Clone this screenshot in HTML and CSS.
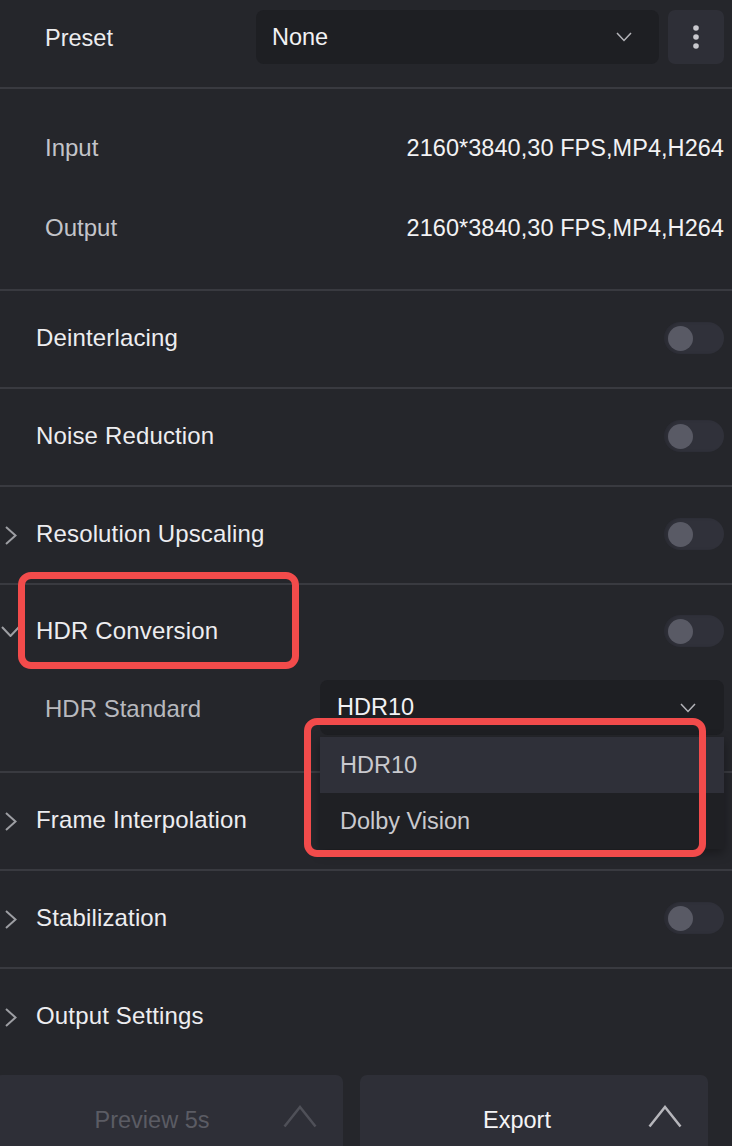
FILE: index.html
```html
<!DOCTYPE html>
<html>
<head>
<meta charset="utf-8">
<link rel="stylesheet" href="styles.css">
</head>
<body>
<div class="panel">
  <div class="preset-row">
    <span class="preset-label">Preset</span>
    <div class="select preset-select">
      <span>None</span>
      <svg class="caret" width="16" height="10" viewBox="0 0 16 10"><polyline points="1,1 8,8.5 15,1"/></svg>
    </div>
    <div class="more-btn">
      <svg width="8" height="26" viewBox="0 0 8 26"><circle cx="4" cy="4" r="2.8"/><circle cx="4" cy="13" r="2.8"/><circle cx="4" cy="22" r="2.8"/></svg>
    </div>
  </div>
  <div class="divider"></div>

  <div class="io">
    <div class="io-row"><span class="io-label">Input</span><span class="io-value">2160*3840,30 FPS,MP4,H264</span></div>
    <div class="io-row"><span class="io-label">Output</span><span class="io-value">2160*3840,30 FPS,MP4,H264</span></div>
  </div>
  <div class="divider"></div>

  <div class="row">
    <span class="chev"></span>
    <span class="row-label">Deinterlacing</span>
    <span class="toggle"><span class="knob"></span></span>
  </div>
  <div class="divider"></div>

  <div class="row">
    <span class="chev"></span>
    <span class="row-label">Noise Reduction</span>
    <span class="toggle"><span class="knob"></span></span>
  </div>
  <div class="divider"></div>

  <div class="row">
    <span class="chev"><svg class="chev-right" width="12" height="19" viewBox="0 0 12 19"><polyline points="1,1 10.5,9.5 1,18"/></svg></span>
    <span class="row-label">Resolution Upscaling</span>
    <span class="toggle"><span class="knob"></span></span>
  </div>
  <div class="divider"></div>

  <div class="hdr-section">
    <div class="row hdr-head">
      <span class="chev"><svg class="chev-down" width="19" height="11" viewBox="0 0 19 11"><polyline points="1,1 9.5,10 18,1"/></svg></span>
      <span class="row-label">HDR Conversion</span>
      <span class="toggle"><span class="knob"></span></span>
    </div>
    <div class="sub-row">
      <span class="sub-label">HDR Standard</span>
      <div class="select-wrap">
        <div class="select hdr-select">
          <span>HDR10</span>
          <svg class="caret" width="16" height="10" viewBox="0 0 16 10"><polyline points="1,1 8,8.5 15,1"/></svg>
        </div>
        <div class="menu">
          <div class="menu-item active">HDR10</div>
          <div class="menu-item">Dolby Vision</div>
        </div>
      </div>
    </div>
  </div>
  <div class="divider"></div>

  <div class="row">
    <span class="chev"><svg class="chev-right" width="12" height="19" viewBox="0 0 12 19"><polyline points="1,1 10.5,9.5 1,18"/></svg></span>
    <span class="row-label">Frame Interpolation</span>
    <span class="toggle"><span class="knob"></span></span>
  </div>
  <div class="divider"></div>

  <div class="row">
    <span class="chev"><svg class="chev-right" width="12" height="19" viewBox="0 0 12 19"><polyline points="1,1 10.5,9.5 1,18"/></svg></span>
    <span class="row-label">Stabilization</span>
    <span class="toggle"><span class="knob"></span></span>
  </div>
  <div class="divider"></div>

  <div class="row">
    <span class="chev"><svg class="chev-right" width="12" height="19" viewBox="0 0 12 19"><polyline points="1,1 10.5,9.5 1,18"/></svg></span>
    <span class="row-label">Output Settings</span>
  </div>

  <div class="actions">
    <div class="action-btn preview">
      <span class="action-text">Preview 5s</span>
      <svg class="up" width="34" height="23" viewBox="0 0 34 23"><polyline points="1.5,21.5 17,2 32.5,21.5"/></svg>
    </div>
    <div class="action-btn export">
      <span class="action-text">Export</span>
      <svg class="up" width="34" height="23" viewBox="0 0 34 23"><polyline points="1.5,21.5 17,2 32.5,21.5"/></svg>
    </div>
  </div>

  <div class="mark mark-hdr"></div>
  <div class="mark mark-menu"></div>
</div>
</body>
</html>
```

FILE: styles.css
```css
html, body {
  margin: 0;
  padding: 0;
  background: #25262b;
  overflow: hidden;
}
body {
  font-family: "Liberation Sans", Arial, sans-serif;
  font-size: 23.5px;
  color: #ececef;
}
.panel {
  position: relative;
  width: 732px;
  height: 1146px;
}
.divider {
  height: 2px;
  background: #393a40;
}

/* preset */
.preset-row {
  display: flex;
  align-items: center;
  box-sizing: content-box;
  height: 54px;
  padding: 10px 8px 23px 0;
}
.preset-label {
  width: 211px;
  padding-left: 45px;
  padding-top: 2px;
  color: #ececef;
}
.select {
  display: flex;
  align-items: center;
  justify-content: space-between;
  background: #1e1f23;
  border-radius: 8px;
  box-sizing: border-box;
}
.preset-select {
  width: 403px;
  height: 54px;
  padding: 0 27px 0 16px;
  color: #f2f2f4;
}
.caret polyline {
  fill: none;
  stroke: #b4b4b9;
  stroke-width: 1.5;
}
.more-btn {
  margin-left: 9px;
  width: 56px;
  height: 54px;
  border-radius: 7px;
  background: #2e2f37;
  display: flex;
  align-items: center;
  justify-content: center;
}
.more-btn circle { fill: #c9c9ce; }

/* io */
.io {
  padding: 19px 8px 21px 45px;
}
.io-row {
  height: 80px;
  display: flex;
  align-items: center;
  justify-content: space-between;
}
.io-label { color: #c3c4c9; font-size: 24px; }
.io-value { color: #f2f2f4; letter-spacing: 0.05px; }

/* rows */
.row {
  height: 96px;
  display: flex;
  align-items: center;
  padding-right: 8px;
}
.chev {
  width: 36px;
  flex: 0 0 36px;
  display: flex;
  align-items: center;
}
.chev-right { margin-left: 5px; }
.chev-down { margin-left: 1px; }
.chev polyline {
  fill: none;
  stroke: #9d9ea3;
  stroke-width: 2;
}
.row-label {
  flex: 1;
  font-size: 24px;
  letter-spacing: 0.15px;
  color: #ededf0;
  margin-top: -3px;
}
.toggle {
  width: 60px;
  height: 32px;
  border-radius: 16px;
  background: #30313a;
  display: flex;
  align-items: center;
  padding-left: 4px;
  box-sizing: border-box;
  box-shadow: inset 3px 0 3px rgba(0,0,0,0.12);
  margin-top: -2px;
}
.knob {
  width: 25px;
  height: 25px;
  border-radius: 50%;
  background: #595a65;
}

/* hdr */
.hdr-section {
  height: 186px;
}
.hdr-head {
  height: 92px;
}
.hdr-head .toggle { margin-top: 0; }
.hdr-head .row-label { margin-top: 0; }
.sub-row {
  margin-top: 3px;
  display: flex;
  align-items: center;
  padding: 0 8px 0 45px;
}
.sub-label {
  width: 275px;
  font-size: 24px;
  color: #b8b9be;
  padding-top: 2px;
}
.select-wrap {
  position: relative;
  width: 404px;
}
.hdr-select {
  height: 55px;
  padding: 0 28px 0 17px;
  color: #f2f2f4;
}
.menu {
  position: absolute;
  left: 0;
  top: 57px;
  width: 404px;
  background: #1f2024;
  box-shadow: 0 4px 10px rgba(0,0,0,0.35);
  z-index: 2;
}
.menu-item {
  height: 56px;
  display: flex;
  align-items: center;
  padding-left: 20px;
  color: #c9c9ce;
}
.menu-item.active {
  background: #2f3039;
}

/* actions */
.actions {
  margin-top: 10px;
  margin-left: -5px;
  display: flex;
  gap: 17px;
}
.action-btn {
  width: 348px;
  height: 90px;
  border-radius: 7px;
  background: #2e2f37;
  display: flex;
  align-items: center;
}
.action-text {
  flex: 0 0 314px;
  text-align: center;
}
.up {
  margin-left: -26px;
  margin-top: -8px;
}
.up polyline {
  fill: none;
  stroke-width: 2.5;
}
.preview .action-text { color: #5b5c64; }
.preview .up polyline { stroke: #4f5058; }
.export .action-text { color: #f4f4f6; }
.export .up polyline { stroke: #b6b6bb; }

/* annotation marks */
.mark {
  position: absolute;
  border: 7px solid #f24b4b;
  border-radius: 13px;
  box-sizing: border-box;
  z-index: 5;
}
.mark-hdr {
  left: 18px;
  top: 572px;
  width: 281px;
  height: 97px;
}
.mark-menu {
  left: 304px;
  top: 718px;
  width: 402px;
  height: 139px;
}
```
